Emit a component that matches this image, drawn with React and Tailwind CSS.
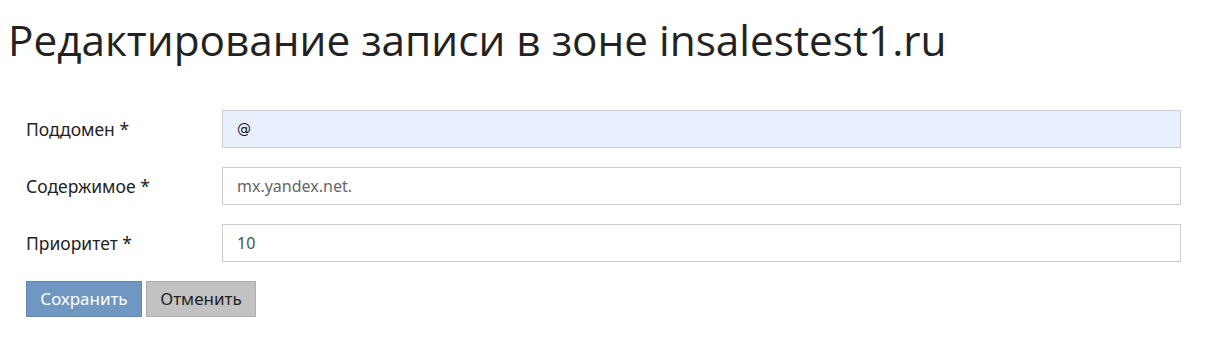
import React, { useState } from 'react';

const Field = ({ label, value, onChange, autofill, textClass }) => (
    <div className="flex items-center h-[38px] mb-[19px]">
        <label className="w-[196px] shrink-0 text-[17.5px] text-[#222]">{label}</label>
        <input
            type="text"
            value={value}
            onChange={e => onChange(e.target.value)}
            className={`w-[959px] h-full border border-[#cccccc] px-[14px] focus:outline-none ${autofill ? 'bg-[#e8f0fe]' : 'bg-white'} ${textClass}`}
        />
    </div>
);

const App = () => {
    const [subdomain, setSubdomain] = useState('@');
    const [content, setContent] = useState('mx.yandex.net.');
    const [priority, setPriority] = useState('10');

    return (
        <div className="bg-white min-h-[363px] font-['Noto_Sans','Open_Sans',sans-serif]">
            <h1 className="pl-[8px] pt-[12px] text-[42.3px] leading-[56px] text-[#222] font-['Open_Sans','Noto_Sans',sans-serif]">
                Редактирование записи в зоне insalestest1.ru
            </h1>
            <form className="pl-[26px] pt-[42px]" onSubmit={e => e.preventDefault()}>
                <Field label="Поддомен *" value={subdomain} onChange={setSubdomain} autofill textClass="text-[#111] font-['DejaVu_Sans',sans-serif] text-[14px]" />
                <Field label="Содержимое *" value={content} onChange={setContent} textClass="text-[#666] text-[16px]" />
                <Field label="Приоритет *" value={priority} onChange={setPriority} textClass="text-[#3d5a3d] text-[16px]" />
                <div className="flex gap-[4px]">
                    <button type="submit" className="w-[116px] h-[36px] bg-[#6f97c2] border border-[#6389b3] text-white text-[17px]">
                        Сохранить
                    </button>
                    <button type="button" className="w-[110px] h-[36px] bg-[#c2c2c2] border border-[#adadad] text-[#222] text-[17px]">
                        Отменить
                    </button>
                </div>
            </form>
        </div>
    );
};

export default App;
